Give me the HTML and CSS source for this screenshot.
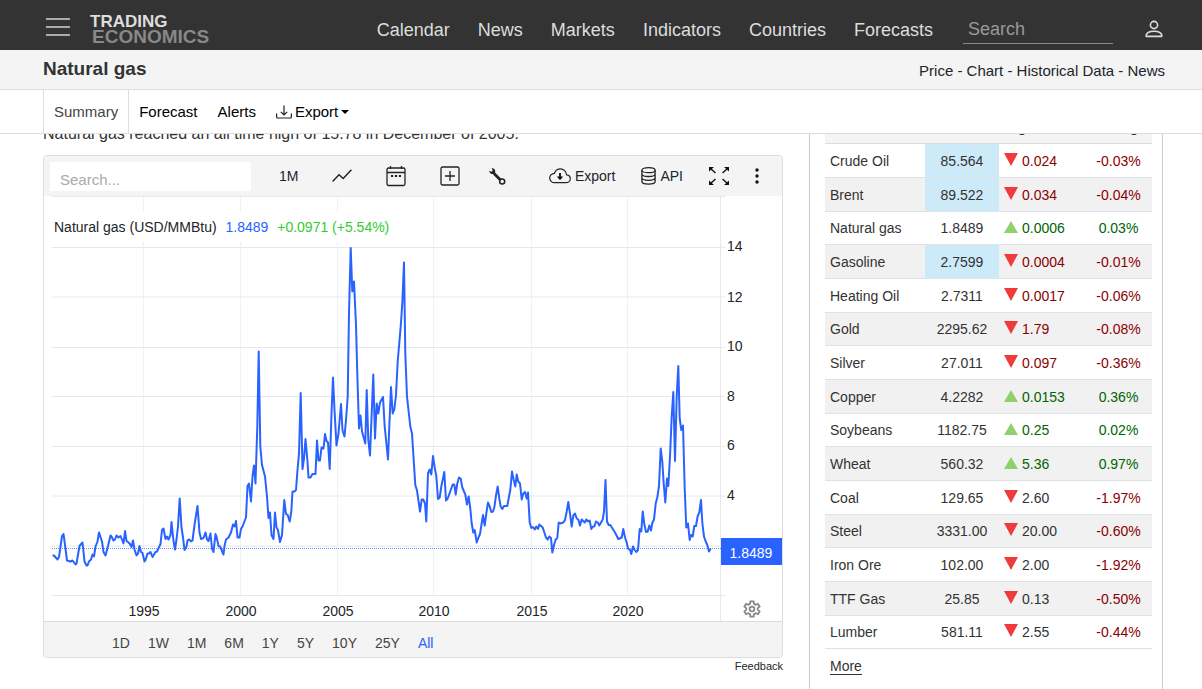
FILE: index.html
```html
<!DOCTYPE html>
<html lang="en">

<head>
    <meta charset="UTF-8">
    <meta name="viewport" content="width=device-width, initial-scale=1">
    <title>Natural gas</title>
    <link rel="stylesheet" href="styles.css">
</head>

<body>
    <div class="top">
        <header class="header">
            <div class="container header-row">
                <button class="burger" type="button" aria-label="Menu"><span></span><span></span><span></span></button>
                <a class="logo" href="#"><span class="logo-top">TRADING</span><span class="logo-bottom">ECONOMICS</span></a>
                <nav class="nav">
                    <a href="#">Calendar</a>
                    <a href="#">News</a>
                    <a href="#">Markets</a>
                    <a href="#">Indicators</a>
                    <a href="#">Countries</a>
                    <a href="#">Forecasts</a>
                </nav>
                <input class="header-search" type="text" placeholder="Search" aria-label="Search">
                <a class="user" href="#" aria-label="Account">
                    <svg width="18" height="18" viewBox="0 0 18 18" fill="none" stroke="#ddd" stroke-width="1.6">
                        <circle cx="9" cy="5" r="3.6" />
                        <path d="M1.8 16.4h14.4c.5 0 .8-.4.7-.9-.4-2.5-3.4-4.3-7.9-4.3s-7.5 1.8-7.9 4.3c-.1.5.2.9.7.9z" />
                    </svg>
                </a>
            </div>
        </header>
        <div class="titlebar">
            <div class="container titlebar-row">
                <h1>Natural gas</h1>
                <div class="crumbs"><a href="#">Price</a> - <a href="#">Chart</a> - <a href="#">Historical Data</a> - <a href="#">News</a></div>
            </div>
        </div>
        <div class="tabs">
            <div class="container tabs-row">
                <a class="on" href="#">Summary</a>
                <a href="#">Forecast</a>
                <a href="#">Alerts</a>
                <button type="button">
                    <svg width="16" height="14" viewBox="0 0 16 14" fill="none" stroke="#222" stroke-width="1.2">
                        <path d="M8 .5V10M4.8 6.8L8 10l3.2-3.2M.6 8.5V12q0 1 1 1h12.8q1 0 1-1V8.5" />
                    </svg>
                    Export
                    <span class="caret"></span>
                </button>
            </div>
        </div>
    </div>

    <main class="container main">
        <section class="content">
            <p class="intro">Natural gas reached an all time high of 15.78 in December of 2005.</p>
            <div class="card">
                <div class="toolbar">
                    <input class="chart-search" type="text" placeholder="Search..." aria-label="Search chart">
                    <div class="tools">
                        <button type="button">1M</button>
                        <button type="button" aria-label="Chart type">
                            <svg width="20" height="14" viewBox="0 0 20 14" fill="none" stroke="#222" stroke-width="1.4">
                                <path d="M.6 12.6L7 5.8l4.2 3.7L19.4.8" />
                            </svg>
                        </button>
                        <button type="button" aria-label="Dates">
                            <svg width="20" height="22" viewBox="0 0 20 22" fill="none" stroke="#222" stroke-width="1.3">
                                <rect x="1" y="3" width="18" height="17.5" rx="1.5" />
                                <path d="M1 7.5h18M4.5 1v3M15.5 1v3" />
                                <path d="M5 11h2.2M8.9 11h2.2M12.8 11h2.2" stroke-width="2.2" />
                            </svg>
                        </button>
                        <div class="tools-pair">
                            <button type="button" aria-label="Add">
                                <svg width="20" height="20" viewBox="0 0 20 20" fill="none" stroke="#222" stroke-width="1.3">
                                    <rect x="1" y="1" width="18" height="18" rx="1.5" />
                                    <path d="M10 5v10M5 10h10" />
                                </svg>
                            </button>
                            <button type="button" aria-label="Settings">
                                <svg width="18" height="18" viewBox="0 0 18 18" fill="none" stroke="#222">
                                    <path d="M6 6.5l7 7" stroke-width="2.8" />
                                    <path d="M3.6 1.3c2.2-.4 4 1.3 3.6 3.6-.3 2-2.5 2.7-4 1.8C1.9 6 1.2 5.2 1.1 4l2.4.8 1.3-1.2z" fill="#222" stroke="none" />
                                    <circle cx="14.2" cy="14.5" r="2.5" stroke-width="1.5" fill="#f4f4f4" />
                                </svg>
                            </button>
                        </div>
                    </div>
                    <div class="tools tools-right">
                        <button type="button">
                            <svg width="22" height="16" viewBox="0 0 22 16" fill="none" stroke="#222" stroke-width="1.2">
                                <path d="M5.5 14.7h11.3c2.6 0 4.5-1.8 4.5-4 0-2.1-1.7-3.7-3.8-3.9C17.3 3.4 14.7.9 11.5.9 8.7.9 6.3 2.7 5.4 5.3 2.8 5.5.7 7.5.7 10c0 2.6 2.1 4.7 4.8 4.7z" />
                                <path d="M11 5v5" stroke-width="2" />
                                <path d="M7.8 8.5h6.4L11 12.3z" fill="#111" stroke="none" />
                            </svg>
                            Export
                        </button>
                        <button type="button">
                            <svg width="15" height="18" viewBox="0 0 15 18" fill="none" stroke="#222" stroke-width="1.3">
                                <ellipse cx="7.5" cy="3.2" rx="6.6" ry="2.5" />
                                <path d="M.9 3.2v11.4c0 1.4 3 2.6 6.6 2.6s6.6-1.2 6.6-2.6V3.2M.9 7c0 1.4 3 2.5 6.6 2.5s6.6-1.1 6.6-2.5M.9 10.8c0 1.4 3 2.5 6.6 2.5s6.6-1.1 6.6-2.5" />
                            </svg>
                            API
                        </button>
                        <button type="button" aria-label="Full screen">
                            <svg width="20" height="18" viewBox="0 0 20 18" fill="none" stroke="#111" stroke-width="1.4">
                                <path d="M1.5 1.5l5 4.500M18.500 1.500l-5 4.500M1.500 16.500l5-4.500M18.500 16.500l-5-4.500" />
                                <path d="M0 0h5L0 4.500zM20 0h-5l5 4.500zM0 18h5l-5-4.500zM20 18h-5l5-4.500z" fill="#111" stroke="none" />
                            </svg>
                        </button>
                        <button type="button" aria-label="More tools">
                            <svg width="4" height="16" viewBox="0 0 4 16" fill="#111">
                                <circle cx="2" cy="2" r="1.7" />
                                <circle cx="2" cy="8" r="1.7" />
                                <circle cx="2" cy="14" r="1.7" />
                            </svg>
                        </button>
                    </div>
                </div>

                <div class="chart">
                    <div class="legend">Natural gas (USD/MMBtu) <span class="last">1.8489</span> <span class="change">+0.0971 (+5.54%)</span></div>
                    <svg class="plot" viewBox="44 196 738 425">
                        <g class="grid-v">
                            <path d="M143.5 196v400M240.5 196v400M337.5 196v400M433.5 196v400M531.5 196v400M627.5 196v400" />
                        </g>
                        <g class="grid-h">
                            <path d="M52 196.5h673M52 247.5h673M52 297h673M52 347.5h673M52 396.5h673M52 446.5h673M52 496h673M52 546h673M52 595.5h673M720.5 196v425" />
                        </g>
                        <path class="last-line" d="M52 548.5h669" />
                        <polyline class="series" points="
                            52.5,555.5 54,555.5 57.5,559.5 59,557 62,536 63.5,534 65,545 67,560.5 70.5,561.5 72.5,560.5 75.5,564.5 76.5,563.5
                            79.5,546 82.5,542.5 84.5,561.5 86.5,565.5 87.5,565.5 89,561.5 91,559.5 92.5,554.5 94,556.5 95.5,546.5 97.5,541.5 99,532.5
                            102,541.5 103.5,552 105.5,555.5 108,546 110.5,535.5 111.5,536.5 113.5,540.5 115,539.5 116.5,535.5 118.5,537.5 120.5,536
                            121.5,538.5 123.5,543.5 125,531 126.5,541 128.5,542.5 130,544 131.5,547 133,540.5 134.5,549.5 136.5,555.5 138,553.5
                            139.5,546 141,552 142.5,553 144.5,561.5 145.5,560 147.5,553.5 149,553.5 150.5,552 152.5,557 155.5,552 157,551.5
                            160.5,544 162,530 163.5,528.5 165.5,539 167,536.5 168.5,539.5 170.5,535 171.5,522 173.5,541 175,549.5 176.5,539.5
                            178,526.5 179.7,498.5 181.5,527.5 183,537.5 184.5,550 186.5,546.5 187.5,540.5 189.5,539.5 191,541.5 192.5,540.5
                            194.5,525 197.5,506 199.5,532.5 201,539 203.5,538 205.5,532.5 207,539.5 208.5,541 210.5,533.5 212,548.5 213.5,552
                            215.5,534 216.5,536.5 218.5,546 220,546.5 223.5,554.5 224.5,546 226,539.5 228.5,537.5 231,532.5 233,524.5 234.5,526.5
                            236,521 237.5,537.5 239.5,537.5 241,529 242.5,526.5 246,517.5 247.5,486 249,483.5 251,501.5 252.5,476.5 254,465.5
                            255.5,483.5 257.3,426.5 258.7,351.5 260.3,446.5 262,465 265,476.5 267,496.5 268.5,518 270,512.5 271.5,535 273.5,539
                            275,512.5 276.5,527.5 278,530 280,542 282,535 284.3,500 286,514 287.7,515 289.7,521.5 291.3,511.5 292.5,491.5 294.5,491.5
                            296,490 297.5,470 299,453.5 300.7,393 302.5,469 304,458.5 305.5,439 307.5,461.5 308.5,477.5 310.5,477.5 312.5,474
                            315.5,474 317,440.5 318.5,460.5 320,460.5 321.5,447.5 323.5,448.5 325,434 326.5,441 328,442.5 329.7,469 331.5,413.5
                            333,377.5 334.5,410 336.5,445.5 338.5,433.5 341,404 342.5,430.5 344.5,436.5 346,420 347.7,396.5 349,313.5 350.7,248
                            352.3,291.5 354,281.5 356,325 357.3,373.5 359,428.5 360.5,415.5 362,431.5 365.3,443.5 366.7,390 368.3,440 370,455.5
                            371.7,413.5 373.3,374.5 375,438.5 376.7,403.5 378.3,413.5 380,402.5 383,397 384.7,426.5 388,459.5 389.3,426.5 391,387
                            392.7,413.5 394.3,409.5 396,395 397.7,361.5 400.7,326.5 402.3,303.5 404,262.5 405.3,353.5 407,396.5 410.3,426.5
                            412,433.5 413.7,460 415.3,485 417,490.5 420,511.5 421.7,499.5 423.3,499.5 425,503.5 426.3,521.5 428,473.5 429.7,469.5
                            431.3,474.5 433,456 434.7,467.5 436.3,476 438,499 439.7,497.5 441.3,486.5 444.3,472 446,500.5 447.7,498.5 452.7,484.5
                            454.3,484.5 455.7,494.5 457.3,483.5 459,477.5 460.7,478.5 462.3,487.5 465.3,494.5 467,504.5 468.7,496.5 470.3,508.5
                            471.7,523.5 473.3,532.5 474.7,530 476.7,542.5 478.3,538 480,534 483,515 484.7,525.5 486.3,513.5 488,502.5 489.7,506.5
                            491.3,512 493,511.5 494.3,507.5 496,495.5 497.7,486.5 499.3,498.5 500.7,506.5 502.3,509 504,506 507.3,506 509,496.5
                            510.3,490 512,471.5 513.7,480 515.3,486.5 516.7,474.5 518.3,481.5 520,483.5 521.7,499.5 523.3,493.5 525,492
                            526.7,498.5 528,492.5 529.7,522.5 531.3,528 533,527 534.7,529.5 536.3,526.5 538,529 539.3,524.5 542.7,527.5 546,537.5
                            547.7,539.5 549.3,536.5 551,538 552.3,552.5 554,545 555.7,539.5 557.3,538 558.7,522.5 560.3,523.5 563.3,522.5 565,520
                            566.7,511.5 568.3,502 570,513.5 571.7,526.5 573.3,515.5 575,513.5 576.7,518.5 578.3,519.5 580,525.5 581.7,519.5
                            584.7,522.5 586.3,519.5 588,521.5 589.7,520.5 591.3,529 593,526.5 594.3,526.5 596,521.5 597.7,522.5 599.3,525.5
                            601,522.5 602.7,519.5 604,511.5 605.5,480 607,521.5 608.7,525 610.3,525 615,532.5 618.3,539 621.7,537.5 623.3,529
                            625,537.5 626.7,542.5 628,548.5 630,550 631.3,554 633,546.5 634.7,550 636.3,552 638,550 639.7,529 641.3,531.5
                            642.7,511.5 644.3,524 646,532 647.7,531.5 649.3,525.5 651,530.5 652.3,523 654,519.5 655.7,503.5 657.3,497.5 659,486
                            660.7,448.5 662.3,461.5 663.7,483.5 665.3,502.5 667,478.5 668.3,486 670,456.5 671.7,416.5 673.3,392 675,461
                            676.7,396.5 678.3,366 679.7,418.5 681.3,430 683,425.5 684.7,488.5 686.3,527.5 688,523.5 689.7,540 691,535 692.7,536.5
                            694.3,526 696,526 697.7,516 699.3,512.5 701,500 702.3,522.5 704,536.5 705.7,541.5 707.3,545 709,551.5 710.7,548.5" />
                        <g class="labels">
                            <text x="727" y="251">14</text>
                            <text x="727" y="302">12</text>
                            <text x="727" y="351">10</text>
                            <text x="727" y="401">8</text>
                            <text x="727" y="450">6</text>
                            <text x="727" y="500">4</text>
                        </g>
                        <g class="labels years">
                            <text x="144" y="616">1995</text>
                            <text x="241" y="616">2000</text>
                            <text x="338" y="616">2005</text>
                            <text x="434" y="616">2010</text>
                            <text x="532" y="616">2015</text>
                            <text x="628" y="616">2020</text>
                        </g>
                        <rect class="tag" x="721" y="538" width="61" height="27" />
                        <text class="tag-text" x="751" y="558">1.8489</text>
                        <g transform="translate(752 609)" fill="none" stroke="#888" stroke-width="1.8">
                            <path d="M-1.6-7.6L1.6-7.6 2-5.2 3.8-4.2 6-5.1 7.6-2.4 5.8-.9 5.8.9 7.6 2.4 6 5.1 3.8 4.2 2 5.2 1.6 7.6-1.6 7.6-2 5.2-3.8 4.2-6 5.1-7.6 2.4-5.8.9-5.8-.9-7.6-2.4-6-5.1-3.8-4.2-2-5.2z" />
                            <circle r="2.4" />
                        </g>
                    </svg>
                </div>

                <div class="periods">
                    <a href="#">1D</a>
                    <a href="#">1W</a>
                    <a href="#">1M</a>
                    <a href="#">6M</a>
                    <a href="#">1Y</a>
                    <a href="#">5Y</a>
                    <a href="#">10Y</a>
                    <a href="#">25Y</a>
                    <a class="on" href="#">All</a>
                </div>
            </div>
            <a class="feedback" href="#">Feedback</a>
        </section>

        <aside class="side">
            <table class="prices">
                <thead>
                    <tr><th></th><th>Price</th><th>Chg</th><th>%Chg</th></tr>
                </thead>
                <tbody>
                    <tr><td><a href="#">Crude Oil</a></td><td class="hit">85.564</td><td class="neg"><i class="down"></i>0.024</td><td class="neg">-0.03%</td></tr>
                    <tr><td><a href="#">Brent</a></td><td class="hit">89.522</td><td class="neg"><i class="down"></i>0.034</td><td class="neg">-0.04%</td></tr>
                    <tr><td><a href="#">Natural gas</a></td><td>1.8489</td><td class="pos"><i class="up"></i>0.0006</td><td class="pos">0.03%</td></tr>
                    <tr><td><a href="#">Gasoline</a></td><td class="hit">2.7599</td><td class="neg"><i class="down"></i>0.0004</td><td class="neg">-0.01%</td></tr>
                    <tr><td><a href="#">Heating Oil</a></td><td>2.7311</td><td class="neg"><i class="down"></i>0.0017</td><td class="neg">-0.06%</td></tr>
                    <tr><td><a href="#">Gold</a></td><td>2295.62</td><td class="neg"><i class="down"></i>1.79</td><td class="neg">-0.08%</td></tr>
                    <tr><td><a href="#">Silver</a></td><td>27.011</td><td class="neg"><i class="down"></i>0.097</td><td class="neg">-0.36%</td></tr>
                    <tr><td><a href="#">Copper</a></td><td>4.2282</td><td class="pos"><i class="up"></i>0.0153</td><td class="pos">0.36%</td></tr>
                    <tr><td><a href="#">Soybeans</a></td><td>1182.75</td><td class="pos"><i class="up"></i>0.25</td><td class="pos">0.02%</td></tr>
                    <tr><td><a href="#">Wheat</a></td><td>560.32</td><td class="pos"><i class="up"></i>5.36</td><td class="pos">0.97%</td></tr>
                    <tr><td><a href="#">Coal</a></td><td>129.65</td><td><i class="down"></i>2.60</td><td class="neg">-1.97%</td></tr>
                    <tr><td><a href="#">Steel</a></td><td>3331.00</td><td><i class="down"></i>20.00</td><td class="neg">-0.60%</td></tr>
                    <tr><td><a href="#">Iron Ore</a></td><td>102.00</td><td><i class="down"></i>2.00</td><td class="neg">-1.92%</td></tr>
                    <tr><td><a href="#">TTF Gas</a></td><td>25.85</td><td><i class="down"></i>0.13</td><td class="neg">-0.50%</td></tr>
                    <tr><td><a href="#">Lumber</a></td><td>581.11</td><td><i class="down"></i>2.55</td><td class="neg">-0.44%</td></tr>
                </tbody>
            </table>
            <a class="more" href="#">More</a>
        </aside>
    </main>
</body>

</html>
```
FILE: styles.css
```css
* {
    margin: 0;
    padding: 0;
    box-sizing: border-box;
}

body {
    display: flex;
    flex-direction: column;
    min-height: 100vh;
    font-family: "Liberation Sans", Arial, sans-serif;
    font-size: 14px;
    color: #212529;
    background: #fff;
}

a {
    color: inherit;
    text-decoration: none;
}

button,
input {
    font: inherit;
    color: inherit;
    border: 0;
    background: none;
    outline: 0;
}

button {
    cursor: pointer;
}

svg {
    display: block;
}

.container {
    width: 100%;
    max-width: 1140px;
    margin: 0 auto;
    padding: 0 8px 0 12px;
}

/* fixed top */
.top {
    position: sticky;
    top: 0;
    z-index: 10;
    background: #fff;
}

.header {
    background: #333;
}

.header-row {
    display: flex;
    align-items: center;
    height: 50px;
}

.burger {
    display: flex;
    flex-direction: column;
    gap: 6px;
    width: 24px;
    margin: 4px 20px 0 3px;
}

.burger span {
    width: 24px;
    height: 2px;
    background: #aaa;
}

.logo {
    display: flex;
    flex-direction: column;
    padding-top: 8px;
    font-weight: bold;
}

.logo-top {
    font-size: 17px;
    line-height: 15px;
    color: #ddd;
}

.logo-bottom {
    padding-left: 2px;
    font-size: 19px;
    line-height: 15px;
    color: #888;
}

.nav {
    display: flex;
    gap: 28px;
    margin-left: auto;
    padding-top: 9px;
    font-size: 18px;
    line-height: 22px;
    color: #ddd;
}

.header-search {
    width: 150px;
    height: 32px;
    margin: 6px 32px 0 30px;
    padding: 4px 5px 0;
    border-bottom: 1px solid #888;
    font-size: 18px;
    color: #ddd;
}

.header-search::placeholder {
    color: #999;
}

.user {
    padding-top: 7px;
}

.titlebar {
    background: #f4f4f4;
    border-bottom: 1px solid #ddd;
}

.titlebar-row {
    display: flex;
    align-items: center;
    justify-content: space-between;
    height: 39px;
    padding-right: 6px;
    padding-bottom: 1px;
}

.titlebar h1 {
    font-size: 19px;
    color: #333;
}

.crumbs {
    padding-top: 2px;
    font-size: 15px;
}

.tabs {
    border-bottom: 1px solid #ddd;
    font-size: 15px;
    color: #000;
}

.tabs-row {
    display: flex;
    height: 43px;
}

.tabs-row a,
.tabs-row button {
    display: flex;
    align-items: center;
    gap: 3px;
    padding: 0 10px;
}

.tabs-row .on {
    border: 1px solid #ddd;
    border-width: 0 1px;
    color: #444;
}

.caret {
    border: 4px solid transparent;
    border-top-color: #000;
    border-bottom: 0;
}

/* page */
.main {
    flex: 1;
    display: grid;
    grid-template-columns: minmax(0, 1fr) 354px;
    gap: 26px;
    margin-top: -12px;
}

.content {
    display: flex;
    flex-direction: column;
}

.intro {
    margin-bottom: 9px;
    font-size: 16px;
    line-height: 24px;
    color: #333;
}

.card {
    border: 1px solid #ddd;
    border-radius: 4px;
    overflow: hidden;
}

.toolbar {
    display: flex;
    align-items: center;
    height: 40px;
    padding: 0 23px 0 6px;
    background: #f4f4f4;
}

.chart-search {
    width: 201px;
    height: 29px;
    padding: 6px 10px 0;
    background: #fff;
    font-size: 15px;
}

.chart-search::placeholder {
    color: #aaa;
}

.tools {
    display: flex;
    align-items: center;
    gap: 34px;
    margin-left: 28px;
}

.tools-pair {
    display: flex;
    align-items: center;
    gap: 28px;
}

.tools button {
    display: flex;
    align-items: center;
    gap: 4px;
}

.tools-right {
    gap: 26px;
    margin-left: auto;
}

.chart {
    position: relative;
}

.legend {
    position: absolute;
    top: 16px;
    left: 10px;
    background: #fff;
    line-height: 30px;
}

.last {
    margin-left: 5px;
    color: #2962ff;
}

.change {
    margin-left: 5px;
    color: #32cd32;
}

.plot {
    width: 100%;
}

.grid-v path {
    stroke: #edf2f4;
}

.grid-h path {
    stroke: #e8e8e8;
}

.series {
    fill: none;
    stroke: #2962ff;
    stroke-width: 2;
    stroke-linejoin: round;
}

.last-line {
    stroke: #2962ff;
    stroke-dasharray: 1 1;
    opacity: .7;
}

.labels {
    font-size: 14px;
    fill: #212529;
}

.years {
    text-anchor: middle;
}

.tag {
    fill: #2962ff;
}

.tag-text {
    font-size: 14px;
    fill: #fff;
    text-anchor: middle;
}

.periods {
    display: flex;
    gap: 18px;
    height: 36px;
    padding-left: 68px;
    border-top: 1px solid #ddd;
    background: #f4f4f4;
    line-height: 42px;
    color: #444;
}

.periods .on {
    color: #2962ff;
}

.feedback {
    align-self: flex-end;
    margin-top: 1px;
    font-size: 11px;
    line-height: 14px;
}

/* sidebar */
.side {
    padding: 0 10px 0 15px;
    border: 1px solid #ccc;
    border-width: 0 1px;
}

.prices {
    width: 100%;
    table-layout: fixed;
    border-collapse: separate;
    border-spacing: 0;
    color: #333;
}

.prices th {
    height: 22px;
    width: 67px;
    border-bottom: 1px solid #ddd;
    background: #f4f4f4;
    line-height: 10px;
    vertical-align: top;
}

.prices th:nth-child(1) {
    width: 100px;
}

.prices th:nth-child(2) {
    width: 74px;
}

.prices th:nth-child(3) {
    width: 86px;
    text-align: left;
}

.prices td {
    height: 34px;
    border-bottom: 1px solid #dee2e6;
    text-align: center;
}

.prices tr:nth-child(3n) td {
    height: 33px;
}

.prices td:nth-child(odd) {
    padding-left: 5px;
    text-align: left;
}

.prices tbody tr:nth-child(even) {
    background: #f1f1f1;
}

.prices .hit {
    background: #cdeaf8;
}

.prices .neg {
    color: #8b0000;
}

.prices .pos {
    color: #006400;
}

.up,
.down {
    display: inline-block;
    margin-right: 4px;
    border: 7px solid transparent;
}

.up {
    border-top: 0;
    border-bottom: 12px solid #8fd16a;
}

.down {
    border-bottom: 0;
    border-top: 13px solid #ef3b3b;
}

.more {
    display: inline-block;
    margin: 9px 5px 0;
    border-bottom: 1px solid #333;
    font-size: 14px;
    line-height: 16px;
    color: #333;
}
```
